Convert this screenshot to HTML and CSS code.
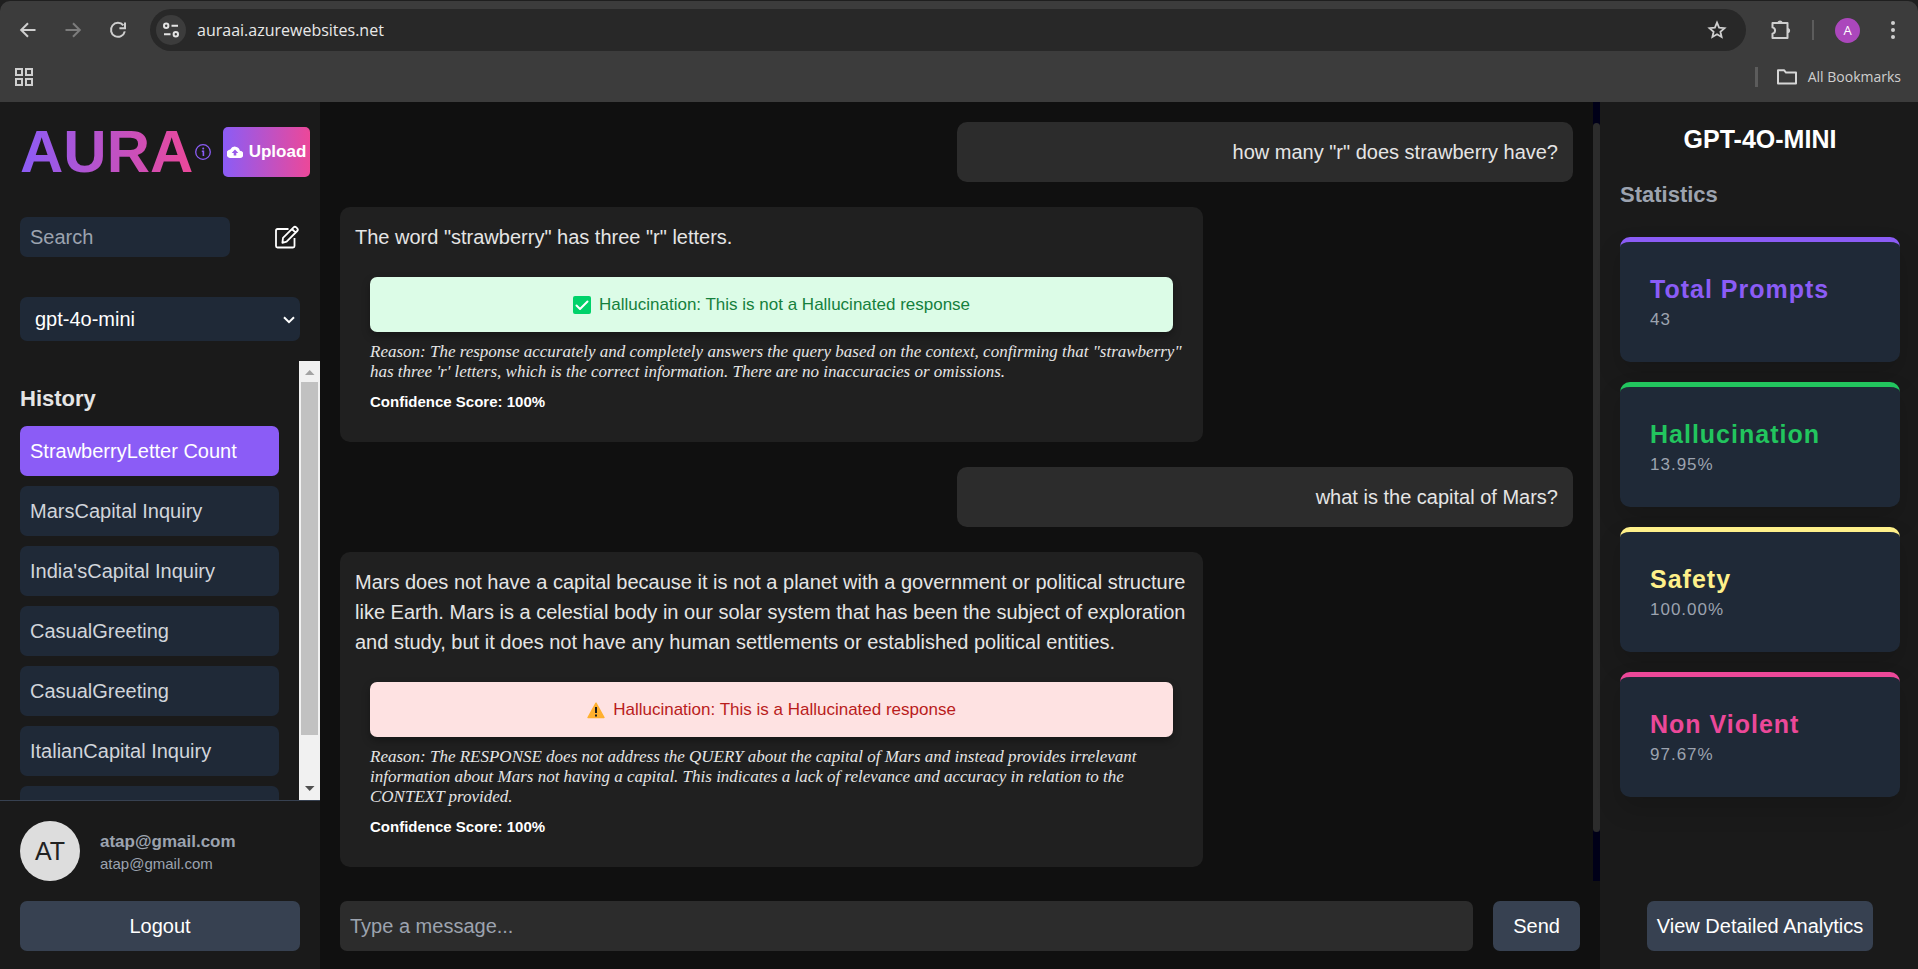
FILE: index.html
```html
<!DOCTYPE html>
<html lang="en">
<head>
<meta charset="utf-8">
<title>AURA</title>
<link rel="stylesheet" href="styles.css">
</head>
<body>
<header class="browser">
  <div class="toolbar">
    <div class="nav">
      <button class="icon-btn" aria-label="Back"><svg width="18" height="18" viewBox="0 0 18 18" fill="none" stroke="#cfcfcf" stroke-width="2"><path d="M16.5 9H2.5M9 2.2 2.2 9 9 15.8"/></svg></button>
      <button class="icon-btn" aria-label="Forward"><svg width="18" height="18" viewBox="0 0 18 18" fill="none" stroke="#7c7c7c" stroke-width="2"><path d="M1.5 9h14M9 2.2 15.8 9 9 15.8"/></svg></button>
      <button class="icon-btn" aria-label="Reload"><svg width="18" height="18" viewBox="0 0 18 18" fill="none" stroke="#cfcfcf" stroke-width="2"><path d="M14.4 4.4A7 7 0 1 0 15.8 10.4M16 1.5v5.7h-5.6"/></svg></button>
    </div>
    <div class="address">
      <button class="site-info" aria-label="Site information"><svg width="18" height="18" viewBox="0 0 18 18" fill="none" stroke="#e3e3e3" stroke-width="2"><circle cx="4.2" cy="4.8" r="2.2"/><path d="M9.5 4.8h6.5M2 13.2h6.5"/><circle cx="13.8" cy="13.2" r="2.2"/></svg></button>
      <input class="url" aria-label="Address" value="auraai.azurewebsites.net">
      <button class="icon-btn" aria-label="Bookmark"><svg width="20" height="20" viewBox="0 0 20 20" fill="none" stroke="#cfcfcf" stroke-width="1.8"><path d="m10 2.6 2.1 5 5.4.5-4.1 3.6 1.2 5.3-4.6-2.8L5.4 17l1.2-5.3-4.1-3.6 5.4-.5z"/></svg></button>
    </div>
    <div class="tools">
      <button class="icon-btn" aria-label="Extensions"><svg width="22" height="22" viewBox="0 0 22 22"><path fill="none" stroke="#cfcfcf" stroke-width="2" stroke-linejoin="round" d="M2.500 4h15v15h-15v-4.400c3.400-.8 3.400-5.400 0-6.200z"/><path fill="#cfcfcf" d="M7.400 4a2.600 2.600 0 0 1 5.200 0zM17.500 8.900a2.600 2.600 0 0 1 0 5.200z"/></svg></button>
      <span class="tool-divider"></span>
      <button class="profile" aria-label="Profile">A</button>
      <button class="icon-btn" aria-label="Menu"><svg width="6" height="20" viewBox="0 0 6 20" fill="#cfcfcf"><circle cx="3" cy="3" r="2"/><circle cx="3" cy="10" r="2"/><circle cx="3" cy="17" r="2"/></svg></button>
    </div>
  </div>
  <div class="bookmarks">
    <button class="icon-btn" aria-label="Apps"><svg width="18" height="18" viewBox="0 0 18 18" fill="none" stroke="#cfcfcf" stroke-width="2"><path d="M1 1h6v6H1zM11 1h6v6h-6zM1 11h6v6H1zM11 11h6v6h-6z"/></svg></button>
    <button class="all-bookmarks"><svg width="22" height="18" viewBox="0 0 22 18" fill="none" stroke="#d6d6d6" stroke-width="2" stroke-linejoin="round"><path d="M2 2.2h6l2 2.4h10v10.8H2z"/></svg>All Bookmarks</button>
  </div>
</header>

<div class="app">
  <aside class="sidebar">
    <div class="brand">
      <h1 class="logo">AURA</h1>
      <button class="info" aria-label="About"><svg width="16" height="16" viewBox="0 0 16 16"><circle cx="8" cy="8" r="7.3" fill="none" stroke="#8b5cf6" stroke-width="1.3"/><path fill="none" stroke="#8b5cf6" stroke-width="1.6" d="M6.800 7.200h1.600v4.800"/><circle cx="8.200" cy="4.600" r="1" fill="#8b5cf6"/></svg></button>
      <button class="upload"><svg width="16" height="12" viewBox="0 0 16 12"><path fill="#fff" fill-rule="evenodd" d="M12.9 4.7A5.1 5.1 0 0 0 3.3 3.5 4.2 4.2 0 0 0 4 12h8.5a3.6 3.6 0 0 0 .4-7.300zM9.300 6.900v2.700H6.700V6.900H4.700L8 3.500l3.300 3.400z"/></svg>Upload</button>
    </div>
    <div class="search-row">
      <input class="search" type="text" placeholder="Search" aria-label="Search">
      <button class="icon-btn" aria-label="New chat"><svg width="26" height="24" viewBox="0 0 26 24" fill="none" stroke="#fff" stroke-width="1.8" stroke-linejoin="round"><path d="M14.500 4H3.500Q2 4 2 5.500v15.500Q2 22.500 3.500 22.500h15.500q1.500 0 1.500-1.500v-8"/><path d="m9 12.800 10.600-10.500q1.300-1.200 2.700.1l.9.900q1.300 1.400 0 2.700L12.600 16.600l-4.200 1.200zM18 4l3.600 3.600"/></svg></button>
    </div>
    <div class="model">
      <select class="model-select" aria-label="Model"><option>gpt-4o-mini</option></select>
      <svg class="chevron" width="12" height="8" viewBox="0 0 12 8" fill="none" stroke="#fff" stroke-width="2"><path d="m1 1.200 5 5 5-5"/></svg>
    </div>
    <div class="history">
      <div class="history-list">
        <h2 class="history-title">History</h2>
        <button class="item active">StrawberryLetter Count</button>
        <button class="item">MarsCapital Inquiry</button>
        <button class="item">India'sCapital Inquiry</button>
        <button class="item">CasualGreeting</button>
        <button class="item">CasualGreeting</button>
        <button class="item">ItalianCapital Inquiry</button>
        <button class="item" aria-label="Older chat"></button>
      </div>
      <div class="bar" aria-hidden="true">
        <svg class="bar-arrow" viewBox="0 0 21 21"><path fill="#a3a3a3" d="M6 14h9.500L10.700 9z"/></svg>
        <div class="bar-track"><div class="bar-thumb"></div></div>
        <svg class="bar-arrow" viewBox="0 0 21 21"><path fill="#505050" d="M6 7h9.500l-4.800 5z"/></svg>
      </div>
    </div>
    <div class="account">
      <div class="user">
        <span class="avatar">AT</span>
        <div class="user-text">
          <p class="user-name">atap@gmail.com</p>
          <p class="user-mail">atap@gmail.com</p>
        </div>
      </div>
      <button class="btn">Logout</button>
    </div>
  </aside>

  <main class="chat">
    <div class="thread">
      <div class="messages">
        <div class="msg mine">how many "r" does strawberry have?</div>
        <article class="msg reply">
          <p>The word "strawberry" has three "r" letters.</p>
          <div class="check">
            <div class="verdict ok"><svg width="18" height="18" viewBox="0 0 18 18"><rect width="18" height="18" rx="2" fill="#00d26a"/><path d="m3.500 9.500 3.500 3.500 7.500-7.500" fill="none" stroke="#fff" stroke-width="2" stroke-linecap="round" stroke-linejoin="round"/></svg>Hallucination: This is not a Hallucinated response</div>
            <p class="reason">Reason: The response accurately and completely answers the query based on the context, confirming that "strawberry" has three 'r' letters, which is the correct information. There are no inaccuracies or omissions.</p>
            <p class="score">Confidence Score: 100%</p>
          </div>
        </article>
        <div class="msg mine">what is the capital of Mars?</div>
        <article class="msg reply">
          <p>Mars does not have a capital because it is not a planet with a government or political structure like Earth. Mars is a celestial body in our solar system that has been the subject of exploration and study, but it does not have any human settlements or established political entities.</p>
          <div class="check">
            <div class="verdict bad"><svg width="18" height="18" viewBox="0 0 18 18"><path d="M9 2.200 17 16.500H1z" fill="#ffb02e" stroke="#ffb02e" stroke-width="1.400" stroke-linejoin="round"/><path d="M9 6v6M9 13.500v2" stroke="#1c1c1c" stroke-width="2"/></svg>Hallucination: This is a Hallucinated response</div>
            <p class="reason">Reason: The RESPONSE does not address the QUERY about the capital of Mars and instead provides irrelevant information about Mars not having a capital. This indicates a lack of relevance and accuracy in relation to the CONTEXT provided.</p>
            <p class="score">Confidence Score: 100%</p>
          </div>
        </article>
      </div>
      <div class="thin-bar" aria-hidden="true"><div class="thin-thumb"></div></div>
    </div>
    <form class="composer">
      <input class="message" type="text" placeholder="Type a message..." aria-label="Message">
      <button class="btn send" type="button">Send</button>
    </form>
  </main>

  <aside class="stats">
    <h2 class="stats-model">GPT-4O-MINI</h2>
    <h3 class="stats-title">Statistics</h3>
    <section class="card purple"><h4>Total Prompts</h4><p>43</p></section>
    <section class="card green"><h4>Hallucination</h4><p>13.95%</p></section>
    <section class="card yellow"><h4>Safety</h4><p>100.00%</p></section>
    <section class="card pink"><h4>Non Violent</h4><p>97.67%</p></section>
    <button class="btn analytics">View Detailed Analytics</button>
  </aside>
</div>
</body>
</html>
```
FILE: styles.css
```css
* { box-sizing: border-box; }
body, h1, h2, h3, h4, p { margin: 0; }
body {
  display: flex;
  flex-direction: column;
  height: 100vh;
  overflow: hidden;
  background: #1f1f1f;
  color: #e5e5e5;
  font: 20px/30px "Liberation Sans", Arial, sans-serif;
}
button, input, select { font: inherit; color: inherit; border: 0; outline: 0; margin: 0; }
button { padding: 0; background: none; cursor: pointer; }
svg { display: block; flex: none; }
.icon-btn { display: flex; align-items: center; }

/* Browser frame */
.browser {
  margin-top: 1px;
  height: 101px;
  flex: none;
  background: #3c3c3c;
  border-radius: 10px 10px 0 0;
  font-family: "Open Sans", "Noto Sans", sans-serif;
}
.toolbar { display: flex; align-items: center; padding: 8px 22px 0 19px; }
.nav { display: flex; gap: 27px; width: 131px; flex: none; }
.address {
  display: flex;
  align-items: center;
  flex: 1;
  height: 42px;
  padding: 0 19px 0 6px;
  border-radius: 21px;
  background: #282828;
}
.site-info {
  display: flex;
  align-items: center;
  justify-content: center;
  width: 30px;
  height: 30px;
  border-radius: 50%;
  background: #3c3c3c;
}
.url { flex: 1; padding: 0 11px; background: none; color: #e8e8e8; font-size: 16px; }
.tools { display: flex; align-items: center; margin-left: 24px; }
.tool-divider { width: 2px; height: 20px; margin: 0 21px 0 20px; background: #5c5c5c; }
.profile {
  width: 25px;
  height: 25px;
  margin-right: 30px;
  border-radius: 50%;
  background: #ab47bc;
  color: #fff;
  font-size: 13px;
  line-height: 25px;
}
.bookmarks { display: flex; align-items: center; justify-content: space-between; height: 51px; padding: 0 17px 0 15px; }
.all-bookmarks {
  display: flex;
  align-items: center;
  gap: 10px;
  height: 20px;
  padding-left: 18px;
  border-left: 3px solid #5c5c5c;
  color: #cfcfcf;
  font-size: 14px;
}

/* App */
.app { display: flex; flex: 1; min-height: 0; background: #101010; }

.sidebar { display: flex; flex-direction: column; width: 320px; flex: none; background: #1a1a1a; }
.brand { display: flex; align-items: center; height: 60px; margin: 20px 10px 0 20px; }
.logo {
  font-size: 60px;
  line-height: 60px;
  color: transparent;
  background: linear-gradient(to right, #8b5cf6, #ec4899);
  background-clip: text;
  -webkit-background-clip: text;
}
.info { margin-left: 2px; }
.upload {
  display: flex;
  align-items: center;
  justify-content: center;
  gap: 6px;
  width: 87px;
  height: 50px;
  margin-left: auto;
  border-radius: 5px;
  background: linear-gradient(to right, #8b5cf6, #ec4899);
  color: #fff;
  font-size: 17px;
  font-weight: bold;
}
.search-row { display: flex; align-items: center; justify-content: space-between; margin: 35px 20px 0; }
.search { width: 210px; height: 40px; padding: 0 10px; border-radius: 7px; background: #1f2937; }
::placeholder { color: #9ca3af; opacity: 1; }
.model { position: relative; margin: 40px 20px 20px; }
.model-select {
  display: block;
  appearance: none;
  width: 100%;
  height: 44px;
  padding: 0 15px;
  border-radius: 7px;
  background: #1f2937;
  color: #fff;
}
.chevron { position: absolute; right: 5px; top: 19px; pointer-events: none; }
.history { display: flex; flex: 1; min-height: 0; }
.history-list {
  display: flex;
  flex-direction: column;
  gap: 10px;
  flex: 1;
  padding: 20px 20px 0;
  overflow: hidden;
}
.history-title { font-size: 22px; line-height: 35px; }
.item {
  flex: none;
  height: 50px;
  padding: 0 10px;
  border-radius: 7px;
  background: #1f2937;
  color: #d1d5db;
  text-align: left;
}
.item.active { background: #8b5cf6; color: #fff; }
.bar { display: flex; flex-direction: column; width: 21px; background: #f1f1f1; }
.bar-arrow { width: 21px; height: 21px; }
.bar-track { flex: 1; padding: 0 2px; }
.bar-thumb { height: 89%; background: #c1c1c1; }
.account { padding: 20px 20px 18px; border-top: 1px solid #374151; }
.user { display: flex; align-items: center; gap: 20px; margin-bottom: 20px; color: #9ca3af; }
.avatar {
  width: 60px;
  height: 60px;
  border-radius: 50%;
  background: #ddd;
  color: #222;
  font-size: 25px;
  line-height: 60px;
  text-align: center;
}
.user-name { font-size: 17px; line-height: 25px; font-weight: bold; }
.user-mail { font-size: 15px; line-height: 20px; }
.btn { height: 50px; border-radius: 7px; background: #374151; color: #fff; }
.account .btn { width: 100%; }

.chat { display: flex; flex-direction: column; flex: 1; min-width: 0; }
.thread { display: flex; flex: 1; min-height: 0; }
.messages { display: flex; flex-direction: column; gap: 25px; flex: 1; padding: 20px; overflow: hidden; }
.msg { flex: none; padding: 15px; border-radius: 10px; }
.mine { align-self: flex-end; width: 50%; background: #2c2c2c; text-align: right; }
.reply { width: 70%; background: #202020; }
.check { padding: 25px 15px 15px; }
.verdict {
  display: flex;
  align-items: center;
  justify-content: center;
  gap: 8px;
  height: 55px;
  border-radius: 7px;
  box-shadow: 0 4px 8px rgba(0, 0, 0, 0.3);
  font-size: 17px;
}
.ok { background: #dcfce7; color: #15803d; }
.bad { background: #fee2e2; color: #b91c1c; }
.reason { margin: 10px -12px 10px 0; font: italic 17px/20px "Liberation Serif", serif; }
.score { color: #fff; font-size: 15px; line-height: 20px; font-weight: bold; }
.thin-bar { width: 7px; padding: 21px 0 49px; background: #000018; }
.thin-thumb { height: 100%; border-radius: 4px; background: #2c2c2c; }
.composer { display: flex; gap: 20px; padding: 20px 20px 18px; }
.message { flex: 1; min-width: 0; padding: 0 10px; border-radius: 7px; background: #2c2c2c; }
.send { padding: 0 20px; }

.stats { display: flex; flex-direction: column; gap: 20px; width: 318px; flex: none; padding: 20px 18px 18px 20px; background: #1a1a1a; }
.stats-model { color: #fff; font-size: 25px; line-height: 35px; text-align: center; }
.stats-title { color: #9ca3af; font-size: 22px; line-height: 35px; margin-bottom: 5px; }
.card {
  height: 125px;
  padding: 30px;
  border-top: 5px solid;
  border-radius: 10px;
  background: #1f2937;
  box-shadow: 0 12px 24px rgba(0, 0, 0, 0.15);
  letter-spacing: 1px;
}
.card h4 { font-size: 25px; line-height: 35px; }
.card p { color: #9ca3af; font-size: 17px; line-height: 25px; }
.purple { color: #8b5cf6; }
.green { color: #22c55e; }
.yellow { color: #fef08a; }
.pink { color: #ec4899; }
.analytics { align-self: center; margin-top: auto; padding: 0 10px; }
```
